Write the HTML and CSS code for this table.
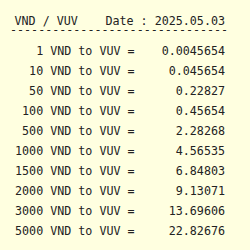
FILE: index.html
```html
<!DOCTYPE html>
<html>
<head>
<meta charset="utf-8">
<link rel="stylesheet" href="styles.css">
</head>
<body>
<div class="box">
  <div class="head">
    <span>VND / VUV</span>
    <span>Date : 2025.05.03</span>
  </div>
  <div class="rule">-------------------------------</div>
  <div class="rows">
    <div class="row"><span class="amt">1</span><span class="lbl">VND to VUV =</span><span class="val">0.0045654</span></div>
    <div class="row"><span class="amt">10</span><span class="lbl">VND to VUV =</span><span class="val">0.045654</span></div>
    <div class="row"><span class="amt">50</span><span class="lbl">VND to VUV =</span><span class="val">0.22827</span></div>
    <div class="row"><span class="amt">100</span><span class="lbl">VND to VUV =</span><span class="val">0.45654</span></div>
    <div class="row"><span class="amt">500</span><span class="lbl">VND to VUV =</span><span class="val">2.28268</span></div>
    <div class="row"><span class="amt">1000</span><span class="lbl">VND to VUV =</span><span class="val">4.56535</span></div>
    <div class="row"><span class="amt">1500</span><span class="lbl">VND to VUV =</span><span class="val">6.84803</span></div>
    <div class="row"><span class="amt">2000</span><span class="lbl">VND to VUV =</span><span class="val">9.13071</span></div>
    <div class="row"><span class="amt">3000</span><span class="lbl">VND to VUV =</span><span class="val">13.69606</span></div>
    <div class="row"><span class="amt">5000</span><span class="lbl">VND to VUV =</span><span class="val">22.82676</span></div>
  </div>
</div>
</body>
</html>
```
FILE: styles.css
```css
html, body {
  margin: 0;
  padding: 0;
  background: #ffffe0;
}
body {
  width: 250px;
  height: 250px;
  overflow: hidden;
  font-family: "DejaVu Sans Mono", monospace;
  font-size: 11.7px;
  color: #222;
}
.box {
  padding-top: 14px;
}
.head {
  display: flex;
  justify-content: space-between;
  line-height: 14px;
  width: 210.5px;
  margin-left: 14.5px;
}
.rule {
  line-height: 4px;
  height: 4px;
  margin-left: 10px;
  white-space: pre;
}
.rows {
  margin-top: 9px;
}
.row {
  display: flex;
  line-height: 20px;
  width: 225px;
}
.amt {
  width: 43.2px;
  text-align: right;
}
.lbl {
  margin-left: 7px;
}
.val {
  flex: 1;
  text-align: right;
}
```
